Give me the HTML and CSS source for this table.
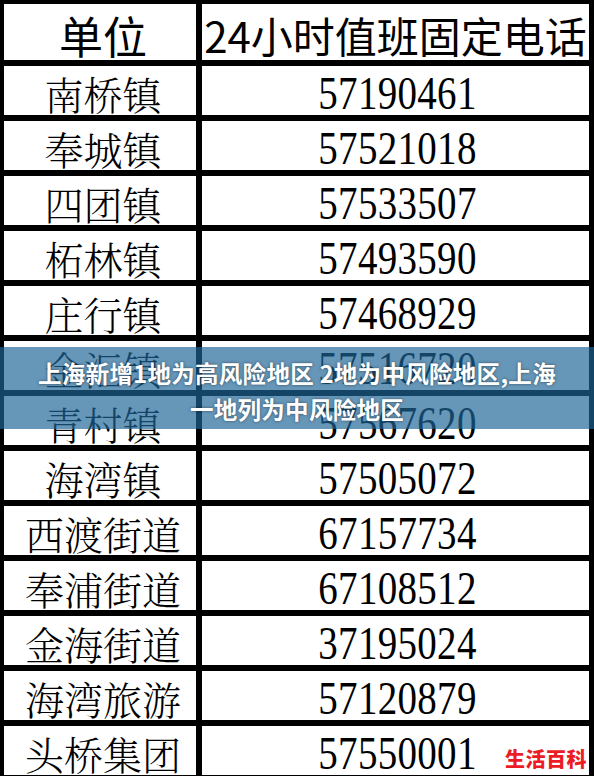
FILE: index.html
```html
<!DOCTYPE html>
<html lang="zh-CN">
<head>
<meta charset="utf-8">
<title>奉贤区各单位24小时值班固定电话</title>
<link rel="stylesheet" href="styles.css">
</head>
<body>
<div class="sheet">
  <div class="grid">
    <div class="cell head">单位</div><div class="cell head">24小时值班固定电话</div>
    <div class="cell name">南桥镇</div><div class="cell num"><span>57190461</span></div>
    <div class="cell name">奉城镇</div><div class="cell num"><span>57521018</span></div>
    <div class="cell name">四团镇</div><div class="cell num"><span>57533507</span></div>
    <div class="cell name">柘林镇</div><div class="cell num"><span>57493590</span></div>
    <div class="cell name">庄行镇</div><div class="cell num"><span>57468929</span></div>
    <div class="cell name">金汇镇</div><div class="cell num"><span>57516720</span></div>
    <div class="cell name">青村镇</div><div class="cell num"><span>57567620</span></div>
    <div class="cell name">海湾镇</div><div class="cell num"><span>57505072</span></div>
    <div class="cell name">西渡街道</div><div class="cell num"><span>67157734</span></div>
    <div class="cell name">奉浦街道</div><div class="cell num"><span>67108512</span></div>
    <div class="cell name">金海街道</div><div class="cell num"><span>37195024</span></div>
    <div class="cell name">海湾旅游</div><div class="cell num"><span>57120879</span></div>
    <div class="cell name">头桥集团</div><div class="cell num"><span>57550001</span></div>
  </div>
  <div class="banner">
    <p>上海新增1地为高风险地区 2地为中风险地区,上海<br>一地列为中风险地区</p>
  </div>
  <div class="brand">生活百科</div>
</div>
</body>
</html>
```
FILE: styles.css
```css
html, body {
  margin: 0;
  padding: 0;
  background: #ffffff;
}
body {
  width: 594px;
  height: 776px;
  overflow: hidden;
}
.sheet {
  position: relative;
  width: 594px;
  height: 776px;
  background: #000;
  box-sizing: border-box;
  padding: 4px 5px 0 4px;
  overflow: hidden;
}
.grid {
  display: grid;
  grid-template-columns: 192px 387px;
  grid-template-rows: 56px repeat(13, 49px);
  column-gap: 6px;
  row-gap: 6px;
}
.cell {
  background: #fff;
  display: flex;
  align-items: center;
  justify-content: center;
  color: #000;
  box-sizing: border-box;
  line-height: 1;
}
.head {
  font-family: "Noto Sans CJK SC", "Liberation Sans", sans-serif;
  font-size: 42px;
  font-weight: 400;
  padding-top: 6px;
}
.head:first-child {
  font-size: 44px;
  padding-left: 6px;
}
.name {
  font-family: "Noto Serif CJK SC", "Noto Sans CJK SC", serif;
  font-weight: 300;
  font-size: 39px;
  padding-top: 6px;
  padding-left: 6px;
}
.num {
  font-family: "Liberation Serif", "Times New Roman", serif;
  font-size: 39px;
  padding-top: 6px;
  padding-left: 4px;
}
.num span {
  display: inline-block;
  letter-spacing: 0.3px;
  transform: scaleY(1.18);
}
.banner {
  position: absolute;
  left: 0;
  top: 347px;
  width: 594px;
  height: 82px;
  box-sizing: border-box;
  padding-top: 6px;
  background: rgba(30, 100, 150, 0.68);
  display: flex;
  align-items: center;
  justify-content: center;
}
.banner p {
  margin: 0;
  color: #fff;
  font-family: "Noto Sans CJK SC", "Liberation Sans", sans-serif;
  font-weight: 700;
  font-size: 23.5px;
  line-height: 36px;
  text-align: center;
  text-shadow: 0 0 3px rgba(0, 0, 0, 0.5);
  letter-spacing: 0.3px;
}
.brand {
  position: absolute;
  right: 7px;
  bottom: 6px;
  color: #ec1c24;
  font-family: "Noto Sans CJK SC", sans-serif;
  font-weight: 900;
  font-size: 20px;
  line-height: 22px;
  letter-spacing: 0.5px;
  text-shadow: 0 0 2px #fff, 0 0 2px #fff;
}
```
